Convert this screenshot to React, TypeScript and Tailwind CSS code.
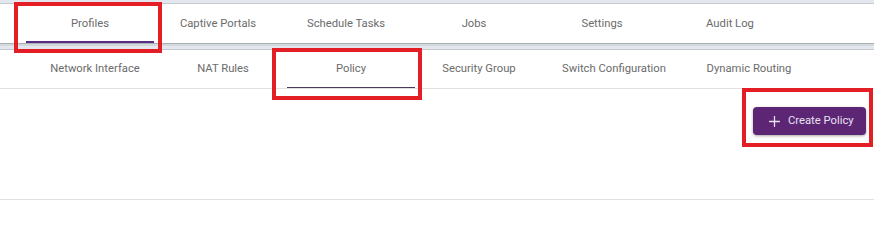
import { Plus } from 'lucide-react';

const topTabs = ['Profiles', 'Captive Portals', 'Schedule Tasks', 'Jobs', 'Settings', 'Audit Log'];
const subTabs = [
  { label: 'Network Interface', w: 'w-[128px]' },
  { label: 'NAT Rules', w: 'w-[128px]' },
  { label: 'Policy', w: 'w-[128px]' },
  { label: 'Security Group', w: 'w-[128px]' },
  { label: 'Switch Configuration', w: 'w-[142px]' },
  { label: 'Dynamic Routing', w: 'w-[128px]' },
];

export default function App() {
  return (
    <div className="relative w-[874px] h-[250px] bg-white overflow-hidden" style={{ fontFamily: 'Roboto, "Liberation Sans", sans-serif' }}>
      {/* top strip */}
      <div className="h-[4px] bg-[#e3e6ee] border-b border-[#c5cad1]" />

      {/* main tabs */}
      <div className="flex h-[39px] pl-[26px]">
        {topTabs.map((t, i) => (
          <div key={t} className="relative w-[128px] flex items-center justify-center text-[11.25px] text-[#6b6b6b] pt-[2px]">
            {t}
            {i === 0 && <div className="absolute left-0 right-0 bottom-0 h-[2px] bg-[#5b2c83]" />}
          </div>
        ))}
      </div>

      {/* divider band */}
      <div className="h-[7px] border-t border-[#a9b0b6] border-b border-b-[#c5cad1] bg-[#e4e7ee] flex flex-col">
        <div className="h-[2px] bg-[#d3d8dd]" />
      </div>

      {/* sub tabs */}
      <div className="flex h-[39px] pl-[31px] border-b border-[#e0e0e0]">
        {subTabs.map(t => (
          <div key={t.label} className={`relative ${t.w} flex items-center justify-center text-[11.25px] text-[#6b6b6b] pt-[1px]`}>
            {t.label}
            {t.label === 'Policy' && <div className="absolute left-0 right-0 bottom-0 h-[1px] bg-[#4b3a5c]" />}
          </div>
        ))}
      </div>

      {/* content */}
      <div className="h-[111px] border-b border-[#e0e0e0] flex justify-end items-start pt-[18px] pr-[8px]">
        <button className="flex items-center gap-[5px] h-[28px] w-[113px] pl-[13px] rounded-[4px] bg-[#5c2675] text-[#e9e2ef] text-[11.25px] shadow-[0_1px_3px_rgba(0,0,0,0.35)]">
          <Plus size={17} strokeWidth={1.8} />
          Create Policy
        </button>
      </div>

      {/* annotation boxes */}
      <div className="absolute left-[14px] top-[2px] w-[148px] h-[51px] border-4 border-[#e31e24]" />
      <div className="absolute left-[272px] top-[48px] w-[150px] h-[52px] border-4 border-[#e31e24]" />
      <div className="absolute left-[742px] top-[88px] w-[131px] h-[59px] border-4 border-[#e31e24]" />
    </div>
  );
}
